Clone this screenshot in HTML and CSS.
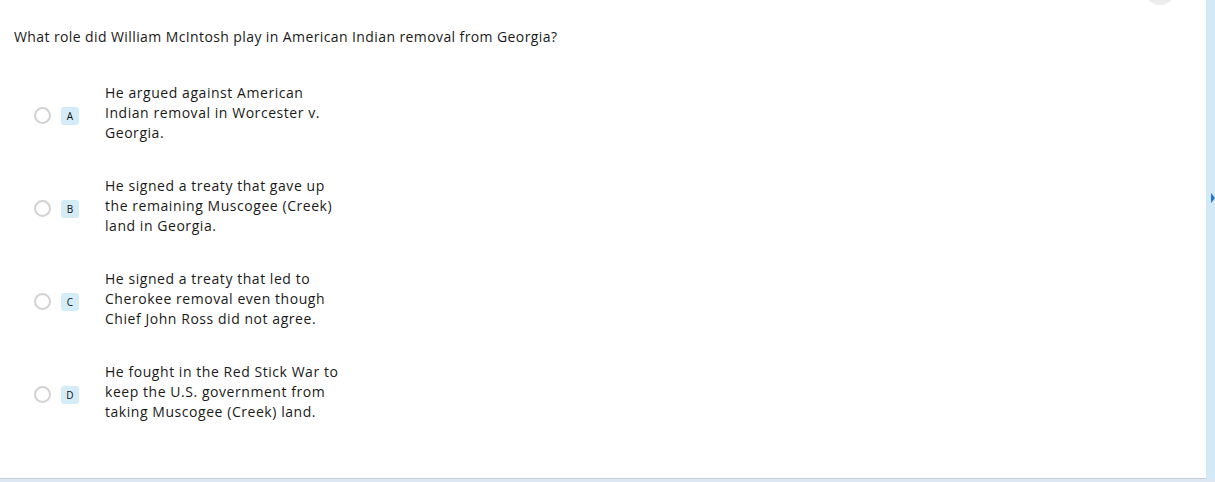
FILE: index.html
```html
<!DOCTYPE html>
<html lang="en">
<head>
<meta charset="UTF-8">
<title>Question</title>
<link rel="stylesheet" href="styles.css">
</head>
<body>

<div class="page">
    <div class="panel">
        <span class="top-btn"></span>

        <p class="question">What role did William McIntosh play in American Indian removal from Georgia?</p>

        <div class="options">
            <label class="option">
                <span class="radio"></span>
                <span class="letter">A</span>
                <span class="text">He argued against American Indian removal in Worcester v. Georgia.</span>
            </label>
            <label class="option">
                <span class="radio"></span>
                <span class="letter">B</span>
                <span class="text">He signed a treaty that gave up the remaining Muscogee (Creek) land in Georgia.</span>
            </label>
            <label class="option">
                <span class="radio"></span>
                <span class="letter">C</span>
                <span class="text">He signed a treaty that led to Cherokee removal even though Chief John Ross did not agree.</span>
            </label>
            <label class="option">
                <span class="radio"></span>
                <span class="letter">D</span>
                <span class="text">He fought in the Red Stick War to keep the U.S. government from taking Muscogee (Creek) land.</span>
            </label>
        </div>
    </div>

    <div class="side">
        <span class="arrow"></span>
    </div>
</div>

</body>
</html>
```

FILE: styles.css
```css
*{
    margin:0;
    padding:0;
    box-sizing:border-box;
}

body{
    background:#dde6f3;
    font-family:"Open Sans",sans-serif;
    color:#1a1a1a;
    height:482px;
    overflow:hidden;
}

.page{
    display:flex;
    height:479px;
}

.panel{
    position:relative;
    flex:1;
    background:white;
    border-bottom:1px solid #c4cdd8;
    padding:27px 14px 0;
}

.top-btn{
    position:absolute;
    top:-27px;
    left:1144px;
    width:32px;
    height:32px;
    border-radius:50%;
    background:#ececec;
}

.question{
    font-size:14px;
    line-height:20px;
    letter-spacing:.4px;
}

.options{
    display:flex;
    flex-direction:column;
    gap:33px;
    margin-top:36px;
}

.option{
    display:flex;
    align-items:center;
    padding-left:20px;
    cursor:pointer;
}

.radio{
    width:17px;
    height:17px;
    border:2px solid #d2d2d2;
    border-radius:50%;
    margin-top:4px;
}

.letter{
    width:18px;
    height:18px;
    margin:6px 0 0 10px;
    border-radius:3px;
    background:#d4ecf7;
    color:#111;
    font-size:10px;
    line-height:18px;
    text-align:center;
}

.text{
    width:240px;
    margin-left:26px;
    font-size:14px;
    line-height:20px;
    letter-spacing:.55px;
}

.side{
    position:relative;
    width:9px;
    background:#d3e9f6;
}

.arrow{
    position:absolute;
    top:193px;
    left:5px;
    border-top:5px solid transparent;
    border-bottom:5px solid transparent;
    border-left:4px solid #1f78c8;
}
```
